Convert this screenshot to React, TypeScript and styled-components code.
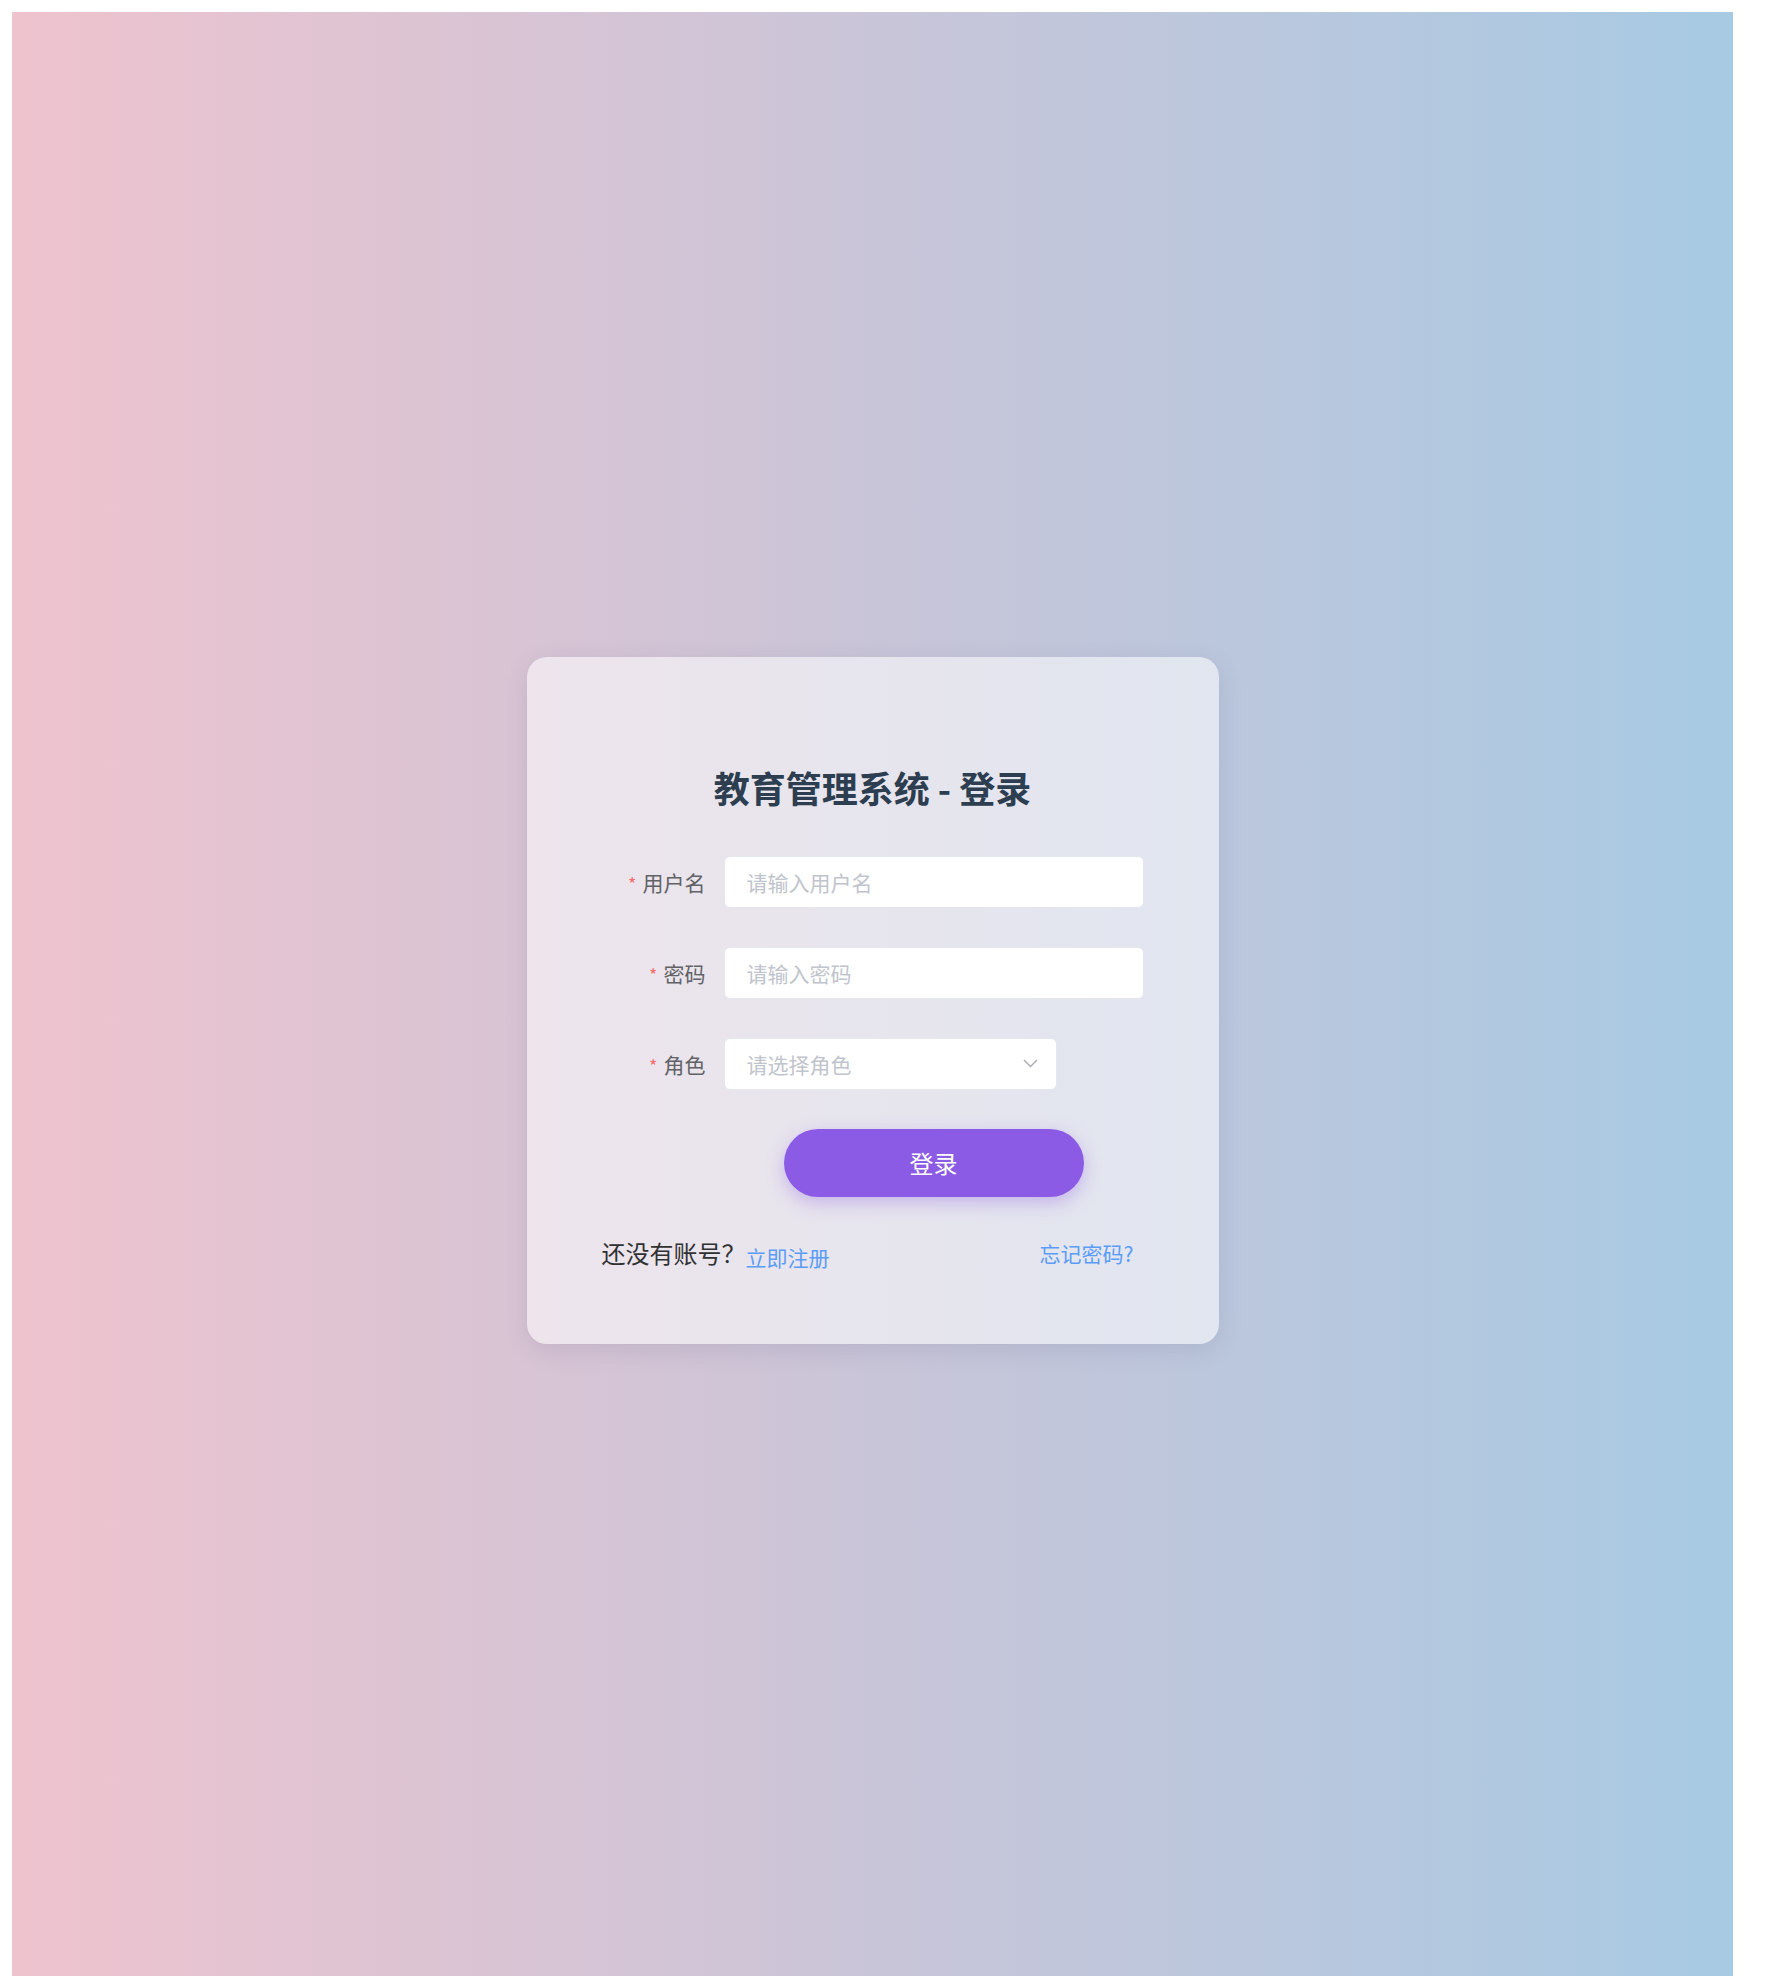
import * as React from "react";
import { FC } from "react";
import styled, { createGlobalStyle } from "styled-components";

const GlobalStyle = createGlobalStyle`
  body {
    margin: 12px 36px 12px 12px;
    font-family: "Noto Sans CJK SC", "Noto Sans", sans-serif;
    background: #ffffff;
  }
  * {
    box-sizing: border-box;
  }
`;

const Page = styled.div`
  min-height: 100vh;
  display: flex;
  align-items: center;
  justify-content: center;
  background: linear-gradient(to right, #eec3ce 0%, #c9c5d8 50%, #a7cae3 100%);
`;

const Card = styled.div`
  width: 692px;
  padding: 108px 75px 76px 75px;
  border-radius: 20px;
  background: rgba(255, 255, 255, 0.55);
  box-shadow: 0 6px 24px rgba(80, 80, 120, 0.14);
`;

const Title = styled.h2`
  margin: 0 0 47px 0;
  font-size: 36px;
  line-height: 44px;
  font-weight: 700;
  color: #2c3e50;
  text-align: center;
`;

const Row = styled.div`
  display: flex;
  align-items: center;
  margin-bottom: 39px;
`;

const Label = styled.label`
  width: 122px;
  flex-shrink: 0;
  padding-right: 18px;
  text-align: right;
  font-size: 21px;
  color: #606266;
`;

const Star = styled.span`
  color: #f56c6c;
  font-size: 18px;
  margin-right: 6px;
`;

const Input = styled.input`
  width: 100%;
  height: 52px;
  padding: 0 22px;
  border: 1px solid #e4e7ed;
  border-radius: 6px;
  background: #ffffff;
  font-family: inherit;
  font-size: 21px;
  color: #606266;
  outline: none;
  &::placeholder {
    color: #c0c4cc;
  }
`;

const SelectBox = styled.div`
  width: 333px;
  height: 52px;
  padding: 0 18px 0 22px;
  border: 1px solid #e4e7ed;
  border-radius: 6px;
  background: #ffffff;
  display: flex;
  align-items: center;
  justify-content: space-between;
  font-size: 21px;
  color: #c0c4cc;
`;

const ButtonRow = styled.div`
  display: flex;
  padding-left: 122px;
  justify-content: center;
`;

const LoginButton = styled.button`
  width: 300px;
  height: 68px;
  border: none;
  border-radius: 34px;
  background: #8b5be6;
  color: #ffffff;
  font-family: inherit;
  font-size: 24px;
  box-shadow: 0 6px 18px rgba(139, 91, 230, 0.35);
  cursor: pointer;
`;

const Links = styled.div`
  margin-top: 41px;
  height: 30px;
  display: flex;
  align-items: center;
  justify-content: space-between;
  padding-right: 10px;
`;

const Hint = styled.span`
  font-size: 24px;
  color: #303133;
`;

const Link = styled.a<{ $drop?: boolean }>`
  font-size: 21px;
  color: #5a9cf8;
  text-decoration: none;
  position: relative;
  top: ${(p) => (p.$drop ? "3px" : "0")};
  cursor: pointer;
`;

const Chevron: FC = () => (
  <svg width="15" height="9" viewBox="0 0 15 9" fill="none">
    <path d="M1 1 L7.5 7.5 L14 1" stroke="#a8abb2" strokeWidth="1.4" />
  </svg>
);

const App: FC = () => (
  <>
    <GlobalStyle />
    <Page>
      <Card>
        <Title>教育管理系统 - 登录</Title>
        <Row>
          <Label>
            <Star>*</Star>用户名
          </Label>
          <Input placeholder="请输入用户名" />
        </Row>
        <Row>
          <Label>
            <Star>*</Star>密码
          </Label>
          <Input type="password" placeholder="请输入密码" />
        </Row>
        <Row>
          <Label>
            <Star>*</Star>角色
          </Label>
          <SelectBox>
            <span>请选择角色</span>
            <Chevron />
          </SelectBox>
        </Row>
        <ButtonRow>
          <LoginButton>登录</LoginButton>
        </ButtonRow>
        <Links>
          <div>
            <Hint>还没有账号？</Hint>
            <Link $drop>立即注册</Link>
          </div>
          <Link>忘记密码?</Link>
        </Links>
      </Card>
    </Page>
  </>
);

export default App;
